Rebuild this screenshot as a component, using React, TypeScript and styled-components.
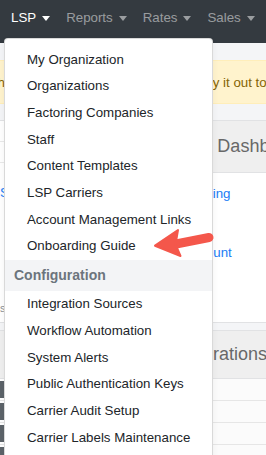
import React from 'react';
import styled, { createGlobalStyle } from 'styled-components';

const GlobalStyle = createGlobalStyle`
  html, body {
    margin: 0;
    padding: 0;
    overflow: hidden;
  }
  body {
    font-family: "Liberation Sans", Arial, Helvetica, sans-serif;
    font-size: 13.3px;
    color: #212529;
  }
`;

const Page = styled.div`
  position: relative;
  height: 455px;
  overflow: hidden;
  background: #f4f5f7;
`;

const Navbar = styled.nav`
  height: 43px;
  background: #343a40;
  display: flex;
  align-items: stretch;
  padding-left: 3px;
`;

const NavItem = styled.div<{ $active?: boolean }>`
  position: relative;
  display: flex;
  align-items: flex-start;
  padding: 10px 8px 0;
  line-height: 16px;
  font-size: 13.3px;
  white-space: nowrap;
  color: ${p => (p.$active ? '#ffffff' : 'rgba(255, 255, 255, 0.5)')};
`;

const Caret = styled.span`
  display: inline-block;
  margin: 6px 0 0 6px;
  border-top: 5px solid currentColor;
  border-left: 4px solid transparent;
  border-right: 4px solid transparent;
`;

const Dropdown = styled.div`
  position: absolute;
  top: 38px;
  left: 1px;
  width: 207px;
  padding: 7.67px 0;
  background: #fff;
  border: 1px solid rgba(0, 0, 0, 0.15);
  border-radius: 4px;
  box-shadow: 0 2px 6px rgba(0, 0, 0, 0.06);
  z-index: 10;
`;

const MenuItem = styled.a`
  display: block;
  padding: 0 22px;
  line-height: 26.67px;
  font-size: 13.3px;
  color: #212529;
  text-decoration: none;
  white-space: nowrap;
`;

const MenuHeader = styled.div`
  padding: 0 9px;
  line-height: 31.33px;
  font-size: 14px;
  font-weight: bold;
  color: #6c757d;
  background: #f3f4f6;
`;

const Main = styled.main`
  padding-top: 17px;
`;

const Alert = styled.div`
  height: 42px;
  display: flex;
  align-items: center;
  background: #fff3cd;
  border-top: 1px solid #ffeeba;
  border-bottom: 1px solid #ffeeba;
  color: #856404;
  font-size: 13.3px;
  white-space: nowrap;
  overflow: hidden;
  text-indent: -10.5px;
`;

const Columns = styled.div`
  display: grid;
  grid-template-columns: 155px 1fr;
  margin-top: 16px;
`;

const Column = styled.div`
  display: flex;
  flex-direction: column;
  gap: 7px;
`;

const Card = styled.section<{ $flush?: boolean; $tall?: boolean }>`
  background: #fff;
  border: 1px solid #e1e2e4;
  border-left-width: ${p => (p.$flush ? 0 : 1)}px;
  min-height: ${p => (p.$tall ? 201 : 0)}px;
  display: flex;
  flex-direction: column;
`;

const CardHeader = styled.h2<{ $h: number; $indent?: number }>`
  margin: 0;
  height: ${p => p.$h}px;
  display: flex;
  align-items: center;
  padding: 0 0 0 ${p => p.$indent ?? 17}px;
  background: #efefef;
  border-bottom: 1px solid #e1e2e4;
  font-size: 18px;
  font-weight: normal;
  color: #686868;
  white-space: nowrap;
`;

const LinkList = styled.ul`
  list-style: none;
  margin: 0;
  padding: 11px 0 0 24px;
  li {
    line-height: 20px;
    margin-bottom: 39px;
  }
  a {
    color: #1a7cf5;
    text-decoration: none;
  }
`;

const Row = styled.div`
  height: 21px;
  display: flex;
  align-items: center;
  border-bottom: 1px solid #e6e6e6;
  background: #fbfbfb;
`;

const LeftRow = styled.div`
  height: 20px;
  border-bottom: 1px solid #e9e9e9;
`;

const LeftLink = styled.a`
  margin-top: 20px;
  line-height: 20px;
  color: #1a7cf5;
  text-decoration: none;
  white-space: nowrap;
`;

const Muted = styled.small`
  margin-top: auto;
  padding-bottom: 8px;
  font-size: 11px;
  color: #8a8f94;
  white-space: nowrap;
`;

const Badge = styled.span`
  display: inline-block;
  width: 36px;
  height: 17px;
  background: #5c6369;
  border-radius: 0 2px 2px 0;
`;

const LeftTableRow = styled.div`
  height: 21px;
  display: flex;
  align-items: center;
  border-bottom: 1px solid #e6e6e6;
`;

const ArrowMark = styled.svg`
  position: absolute;
  left: 145px;
  top: 225px;
  z-index: 20;
`;

const lspLinks = [
  'My Organization',
  'Organizations',
  'Factoring Companies',
  'Staff',
  'Content Templates',
  'LSP Carriers',
  'Account Management Links',
  'Onboarding Guide',
];

const configLinks = [
  'Integration Sources',
  'Workflow Automation',
  'System Alerts',
  'Public Authentication Keys',
  'Carrier Audit Setup',
  'Carrier Labels Maintenance',
];

const App: React.FC = () => {
  return (
    <Page>
      <GlobalStyle />
      <Navbar>
        <NavItem $active>
          LSP
          <Caret />
          <Dropdown>
            {lspLinks.map(l => (
              <MenuItem key={l}>{l}</MenuItem>
            ))}
            <MenuHeader>Configuration</MenuHeader>
            {configLinks.map(l => (
              <MenuItem key={l}>{l}</MenuItem>
            ))}
          </Dropdown>
        </NavItem>
        <NavItem>
          Reports
          <Caret />
        </NavItem>
        <NavItem>
          Rates
          <Caret />
        </NavItem>
        <NavItem>
          Sales
          <Caret />
        </NavItem>
      </Navbar>

      <Main>
        <Alert>The new Onboarding Guide is live – try it out today!</Alert>
        <Columns>
          <Column>
            <Card $flush $tall>
              <LeftRow />
              <LeftRow />
              <LeftLink>Settings</LeftLink>
              <Muted>shipments this week</Muted>
            </Card>
            <Card $flush>
              <CardHeader $h={47} />
              {[0, 1, 2, 3].map(i => (
                <LeftTableRow key={i}>
                  <Badge />
                </LeftTableRow>
              ))}
            </Card>
          </Column>
          <Column>
            <Card $tall>
              <CardHeader $h={51} $indent={20}>Your Dashboard</CardHeader>
              <LinkList>
                <li><a>Tracking</a></li>
                <li><a>Discount</a></li>
              </LinkList>
            </Card>
            <Card>
              <CardHeader $h={47}>Integrations</CardHeader>
              <Row />
              <Row />
              <Row />
              <Row />
            </Card>
          </Column>
        </Columns>
      </Main>

      <ArrowMark width="75" height="40" viewBox="0 0 75 40">
        <path d="M31 19 L64 12.5" stroke="#f4574b" strokeWidth="9" strokeLinecap="round" />
        <path d="M10 20.7 L33 5 L30.5 19.5 L35.5 31 Z" fill="#f4574b" stroke="#f4574b" strokeWidth="2" strokeLinejoin="round" />
      </ArrowMark>
    </Page>
  );
};

export default App;
